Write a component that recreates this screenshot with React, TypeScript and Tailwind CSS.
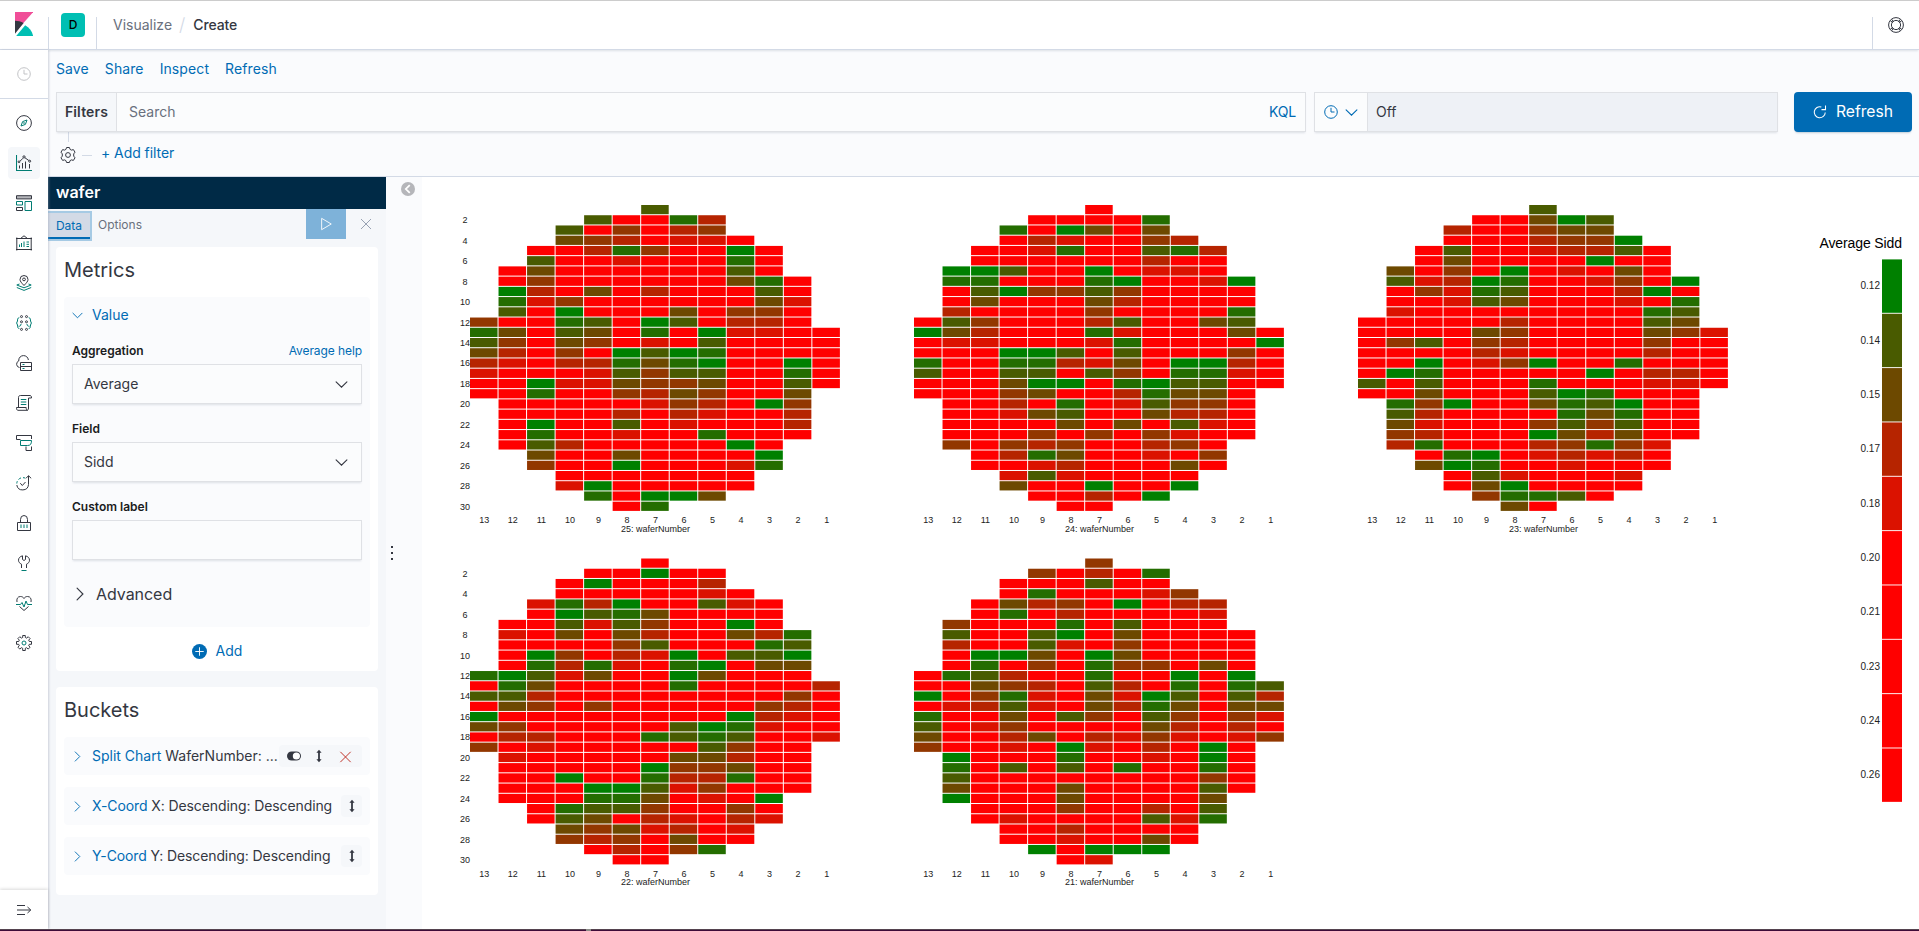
import React from "react";

const TONES: Record<string, string> = {
  "0": "#008000",
  "1": "#246d00",
  "2": "#495b00",
  "3": "#6d4900",
  "4": "#923700",
  "5": "#b62400",
  "6": "#db1200",
  r: "#ff0000",
};

// Leading empty columns of each wafer row.
const OFFSETS = [6, 4, 3, 3, 2, 2, 1, 1, 1, 1, 1, 0, 0, 0, 0, 0, 0, 0, 0, 1, 1, 1, 1, 1, 2, 2, 3, 3, 4, 5];

const W25_ROWS = [
  "2", "2rr15", "2r4r54", "345r66r", "rr514rr0r", "2rr6rrr1r", "r3rrrrrr2r", "r4rrrrrr31r", "05r3r5rrr2r", "164rrrrrr36",
  "2r0rrr3r44r", "4rr12r02r55r", "13r23r1r066rr", "24r34r6r2rrrr", "35r4r0201rrrr", "56r551310rr0r", "6rrr62422rr1r",
  "rr0663443rr2r", "rr1rr4534rr3", "rrrrr645r04", "rrrr5r56rr5", "r0rr2r6rrr5", "r1rr6rr1rrr", "r25rrrrr0r",
  "3rr3rrrr0", "4rr0rrr61", "rrrrrrr", "60rrrrr", "1r003", "r1",
];
const W24_ROWS = [
  "r", "rrrr1", "1r03r3", "r56rr45", "rr61rr215", "rrrrrr5rr", "002rr0r66r", "11rrr10rr60", "r204424rrrr", "r3rrr35rrrr",
  "5rrrr4rrrr1", "r24rrr52rr32", "035rrr16rrr3r", "r66rrr61rrrr0", "rrr002r2rrr4r", "1rr11563r005r", "2rr22r24r116r",
  "rrr300r1022rr", "rrr43rr5133r", "rr5r1r6244r", "rr632rr355r", "rrrr3r3r26r", "rrr4r4r46rr", "4r454rr54r",
  "r513rr6r4", "rr65rrr3r", "626rrrr", "3rr0rr0", "rr5r0", "rr",
];
const W23_ROWS = [
  "2", "rr302", "5rr433", "rrr5440", "r2rr6552r", "r3rrrr0rr", "3r4r0r6r3r", "26501rr64r0", "r4612rrr50r", "rr623rrr6r1",
  "6rrrrrrrr12", "rrrrr5rrrr23", "rrrr34rrrr346", "r42r45rrrr4rr", "rrrr56rrrr5rr", "rr0r640rr1rrr", "r01rrrrr0r55r",
  "2r2rrr1rrr66r", "rr3rrr201rrr", "140rr3120rr", "25rrrr131rr", "36rrr4242rr", "45rrr0353rr", "51rrr54146",
  "r10r6565r", "301rr6rrr", "r26rrr6", "r30rrrr", "4112r", "3r",
];
const W22_ROWS = [
  "r", "rr0rr", "r0rrr5", "rrrrr6r", "6150rr26r", "r0213rrrr", "rr2624rr0r", "6r3r35rr351", "rrrr42rrr12", "r04r560r220",
  "r1516r10r33", "10263rr03rrr", "r13rrrr1rrrr5", "225rrrrrrrr4r", "r34r4rrrrr45r", "0rrrrrrrr056r", "34rrrrr2016rr",
  "r55rrr1212rr6", "4r6rrrrr24rr", "6rrrrr335rr", "rrrrr0443rr", "rr0rr1551rr", "rrr00264rrr", "rrr113r6r0",
  "r1224rr4r", "r23r56r56", "34365r6", "454r3rr", "r5r41", "rr",
];
const W21_ROWS = [
  "4", "4r5r1", "rrr2rr", "r1rrr64", "r354r0r55", "r1r5rrrr6", "4rrr1r2rrr", "2rr20r3rrrr", "5rr26r4rrrr", "r003r03rrrr",
  "r1r4r144r3r", "r125rr1rr0r0", "rr345r25r1r12", "0r416r3602r25", "r6526r3513r33", "1rr3r24r24r46", "2r64rrrr35r5r",
  "3rr53r5646r64", "4rr6r06r5r0r", "0rrr1rr6r0r", "1r2r2r1rr1r", "2rrrrrrrr4r", "3rrr3rrrr2r", "0rrr3rrrr3",
  "rrr4rr5r2", "r6rrrr261", "rr5rrrr", "rr6rr3r", "0r000", "r6",
];

const PX = 28.53;
const PY = 10.23;
const COLS = [13, 12, 11, 10, 9, 8, 7, 6, 5, 4, 3, 2, 1];

function Wafer({ x, y, n, rows, axis }: { x: number; y: number; n: number; rows: string[]; axis?: boolean }) {
  return (
    <g>
      {rows.map((row, r) =>
        row.split("").map((c, i) => (
          <rect key={r + "-" + i} x={x + (OFFSETS[r] + i) * PX} y={y + r * PY} width={PX - 1} height={PY - 1} fill={TONES[c]} />
        )),
      )}
      <g fontSize="9" textAnchor="middle" fill="#222">
        {axis &&
          rows.map((_, r) => (r % 2 ? <text key={r} x={x - 5} y={y + r * PY + 8}>{r + 1}</text> : null))}
        {COLS.map((c, i) => (
          <text key={c} x={x + i * PX + 14.3} y={y + 318.4}>{c}</text>
        ))}
        <text x={x + 185.4} y={y + 326.6}>{n}: waferNumber</text>
      </g>
    </g>
  );
}

const LEGEND = [
  ["0.12", "0"], ["0.14", "2"], ["0.15", "3"], ["0.17", "5"], ["0.18", "6"],
  ["0.20", "r"], ["0.21", "r"], ["0.23", "r"], ["0.24", "r"], ["0.26", "r"],
];

function Charts() {
  return (
    <svg width="1497" height="752" viewBox="422 177 1497 752" className="block font-['Liberation_Sans',sans-serif]">
      <Wafer x={470} y={205} n={25} rows={W25_ROWS} axis />
      <Wafer x={914} y={205} n={24} rows={W24_ROWS} />
      <Wafer x={1358} y={205} n={23} rows={W23_ROWS} />
      <Wafer x={470} y={558.5} n={22} rows={W22_ROWS} axis />
      <Wafer x={914} y={558.5} n={21} rows={W21_ROWS} />
      <text x="1902" y="248" fontSize="14" textAnchor="end" fill="#000" textLength="82.500">Average Sidd</text>
      {LEGEND.map(([label, c], i) => (
        <g key={label}>
          <rect x="1882" y={259.4 + i * 54.34} width="20" height="53.4" fill={TONES[c]} />
          <text x="1880" y={289.3 + i * 54.34} fontSize="10" textAnchor="end" fill="#222">{label}</text>
        </g>
      ))}
    </svg>
  );
}

const D = "#343741";
const T = "#017d73";

function Icon({ children, size = 16, box = 16, stroke = D }: { children: React.ReactNode; size?: number; box?: number; stroke?: string }) {
  return (
    <svg width={size} height={size} viewBox={`0 0 ${box} ${box}`} fill="none" stroke={stroke} className="shrink-0">
      {children}
    </svg>
  );
}

const GEAR =
  "M6.600.5h2.800l.7 1.900 1.300.7 2-.5 1.600 2.600-1.300 1.700v2.200l1.300 1.700-1.600 2.600-2-.5-1.300.7-.7 1.900H6.600l-.7-1.900-1.300-.7-2 .5L1 10.800l1.300-1.700V6.900L1 5.200l1.600-2.600 2 .5 1.300-.7z";

const NAV: React.ReactNode[] = [
  <><circle cx="8" cy="8" r="7.400" /><path stroke={T} d="M11 5 9.400 9.400 5 11 6.600 6.600z" /><circle cx="8" cy="8" r=".4" stroke={T} /></>,
  <><path stroke={T} d="M.5 0v15.500H16" strokeWidth="1.100" /><path d="M3.500 13.500v-3M6.500 13.500v-5.500M9.500 13.500v-7M13.500 13.500V9M4 6.200l3-3M9 2.800l3.800 2.700" /><circle cx="3" cy="6.800" r=".9" /><circle cx="8" cy="1.900" r="1.100" /><circle cx="13.700" cy="6.200" r="1" /></>,
  <><path d="M.5.7h15v3.200H.5z" fill="#b5b6ba" /><path stroke={T} d="M9 6.500h6.500v9H9zM.5 6.500h6v3.500H.5z" /><path d="M.5 12.500h6v3H.5z" /></>,
  <><path d="M.8 2.500v13M15.200 2.500v13M0 3.500h16M4.500 3.500 8 .8l3.500 2.700M0 14.500h16" /><path stroke={T} d="M3.500 12V9.500M5.500 12V8M8 12V6.500M10.500 7h2.500M10.500 9.300h2.500M10.500 11.500h2.500" /></>,
  <><path d="M8 10.500C5.500 7.800 4 6.300 4 4.500a4 4 0 0 1 8 0c0 1.800-1.500 3.300-4 6z" /><circle cx="8" cy="4.400" r="1.400" /><path stroke={T} d="M3.500 9 .8 10 8 12.800 15.200 10l-2.700-1M.8 12.500 8 15.400l7.200-2.900" /></>,
  <><g><circle cx="5.500" cy="1.600" r="1" /><circle cx="10.500" cy="1.600" r="1" /><circle cx="5.500" cy="6.800" r="1" /><circle cx="10.500" cy="6.800" r="1" /><circle cx="5.500" cy="14.400" r="1" /><circle cx="10.500" cy="14.400" r="1" /></g><path stroke={T} d="M3.300 2.500C1.500 3 1.500 4.500 1.500 6L.6 8l.9 2c0 2 .2 3.500 1.800 3.500M12.700 2.500c1.800.5 1.800 2 1.800 3.500l.9 2-.9 2c0 2-.2 3.500-1.800 3.500M5 9c0 1.800-1 2.300-2.500 2.300M11 9c0 1.800 1 2.300 2.500 2.300" /></>,
  <><path d="M3.500 12.500a3.400 3.400 0 0 1-.8-6.500C2.500 2.500 5 .6 7.500.6s4.500 1.600 4.900 4.400" /><path d="M4.500 7.500h11v8h-11zM4.500 11.500h11" /><path stroke={T} d="M6.500 9.500h2M6.500 13.500h2" /></>,
  <><path d="M2.500 12.500V2.500c0-1.200.6-2 2-2h9.500c1 0 1.500.8 1.500 2.500h-3M12.500 3v10c0 1.500-.5 2.300-1.500 2.300H2C1 15.300.5 14.500.5 12.500h9.700c0 1.500.3 2.800 1.300 2.800" /><path stroke={T} d="M4.800 4.500h5.500M4.800 7h5.500M4.800 9.500h5.500" /></>,
  <><path d="M4.500 4.500h-4v-4h15v3.500M15.500 11.500v4H10v-4" /><path stroke={T} d="M4.500 5.500h11c0 3.500-1 5-4 5h-7z" /></>,
  <><path d="M12.500 9.500V.8M10 3.300 12.500.7 15.200 3.300M.8 10a5.900 5.900 0 0 0 11.700-.5M4.300 8.200 6.300 10.500 9.500 7" /><path stroke={T} d="M.8 8.500c0-.8.200-1.600.5-2.300M2.500 4.500c.8-.8 1.600-1.300 2.500-1.600M7 2.700c.8 0 1.500 0 2.200.4" /></>,
  <><path d="M1.500 7.500h13v8h-13zM4.500 7.500V4.500a3.500 4 0 0 1 7 0v3" /><path stroke={T} d="M5 9.500v3.500M8 9.500v3.500M11 9.500v3.500" /></>,
  <><path d="M6.500.8C4 1.500 2.500 3 2.500 5.200c0 1.800 1 3 3 4V13M9.500.8c2.500.7 4 2.200 4 4.400 0 1.800-1 3-3 4V13M6.500.8v3.700L8 5.500l1.500-1V.8" /><path stroke={T} d="M5.500 15.500h5" /></>,
  <><path d="M1 7C.4 4 1.500 1.500 4.500 1.500c1.700 0 2.800.8 3.500 2 .7-1.200 1.800-2 3.500-2 3 0 4.100 2.500 3.500 5.500M3.500 11.500 8 15.500l4.500-4" /><path stroke={T} d="M0 9.500h4.500l1.500-2 2 4.500 2-6 1.500 3.500H16" /></>,
  <><path strokeLinejoin="round" d="M6.700.5h2.600v2l1.400.6 1.500-1.400 1.900 1.900-1.400 1.500.6 1.400h2.200v2.800h-2.200l-.6 1.500 1.400 1.400-1.900 1.900-1.500-1.400-1.400.6v2.200H6.700v-2.200l-1.400-.6-1.500 1.400-1.900-1.900 1.400-1.400-.6-1.500H.5V6.500h2.200l.6-1.400-1.400-1.500 1.900-1.900 1.500 1.400 1.400-.6z" /><circle cx="8" cy="8" r="2" stroke={T} /></>,
];

function Chevron({ dir, size = 12, color = "#006bb4" }: { dir: "down" | "right"; size?: number; color?: string }) {
  return (
    <Icon size={size} stroke={color} box={12}>
      <path strokeLinecap="round" d={dir === "down" ? "M1 3.500 6 8.500 11 3.500" : "M3.500 1 8.500 6 3.500 11"} />
    </Icon>
  );
}

function Clock({ color, size = 14 }: { color: string; size?: number }) {
  return (
    <Icon size={size} box={14} stroke={color}>
      <circle cx="7" cy="7" r="6.300" />
      <path d="M7 2.800V7h3.500" />
    </Icon>
  );
}

const SortIcon = () => (
  <Icon>
    <path d="M8 3v10" strokeWidth="1.800" />
    <path d="M5.400 4.800 8 1.800l2.600 3zM5.400 11.200 8 14.200l2.600-3z" fill="#343741" stroke="none" />
  </Icon>
);

function Select({ value }: { value?: string }) {
  return (
    <div className="flex h-10 items-center justify-between border border-[#dfe1e5] bg-[#fbfcfd] pr-[13px] pl-[11px] shadow-[0_2px_2px_-1px_rgba(152,162,179,0.3)]">
      <span>{value}</span>
      {value && <Chevron dir="down" size={13} color={D} />}
    </div>
  );
}

function Bucket({ kind, text, full }: { kind: string; text: string; full?: boolean }) {
  return (
    <div className="flex h-[38px] items-center rounded bg-[#fafbfd] pr-2 pl-2">
      <div className="mr-[9px] flex w-[11px] justify-center pt-px">
        <Chevron dir="right" size={11} />
      </div>
      <div className={full ? "min-w-0 flex-1 whitespace-nowrap" : "min-w-0 flex-1 tracking-[-0.1px] whitespace-nowrap"}>
        <span className="text-[#006bb4]">{kind}</span> {text}
      </div>
      <div className={full ? "flex h-[22px] w-[83px] shrink-0 items-center rounded bg-[#f5f7fa] pl-[7px]" : "flex h-[22px] w-[21px] shrink-0 items-center justify-center rounded bg-[#f5f7fa]"}>
        {full ? (
          <>
            <Icon>
              <rect x="1" y="3.400" width="14" height="9.200" rx="4.600" fill={D} stroke="none" />
              <circle cx="10.400" cy="8" r="3.600" fill="#fff" stroke="none" />
            </Icon>
            <div className="ml-[9px]"><SortIcon /></div>
            <div className="mt-px ml-[11px]">
              <Icon size={15} stroke="#bd271e"><path d="M2.500 3l11 11M13.500 3l-11 11" /></Icon>
            </div>
          </>
        ) : (
          <SortIcon />
        )}
      </div>
    </div>
  );
}

export default function App() {
  return (
    <div className="relative flex h-[931px] w-[1919px] flex-col overflow-hidden bg-white font-['Inter',sans-serif] text-[14px] leading-5 text-[#343741]">
      <div className="h-px shrink-0 bg-[#cccccc]" />
      <div className="z-10 flex h-[49px] shrink-0 border-b border-[#d3dae6] bg-white shadow-[0_2px_2px_-1px_rgba(152,162,179,0.3)]">
        <div className="flex w-12 shrink-0 justify-center pt-[11px]">
          <svg width="18" height="24" viewBox="0 0 18 24" className="block">
            <path d="M0 0h18.300L0 20.500z" fill="#f04e98" />
            <path d="M0 8.800v13L8.600 10.900C6 9.500 3 8.800 0 8.800z" fill="#343741" />
            <path d="M10.200 13.200 1.200 24h17C17.300 19.500 14.500 15.500 10.200 13.200z" fill="#00bfb3" />
          </svg>
        </div>
        <div className="mt-4 flex w-[49px] shrink-0 border-x border-[#d3dae6]">
          <div className="-mt-1 ml-3 flex h-6 w-6 items-center justify-center rounded bg-[#00bfb3] text-[12px] font-medium text-black">D</div>
        </div>
        <div className="flex pt-[14px] pl-4">
          <span className="text-[#69707d]">Visualize</span>
          <span className="mr-[5px] ml-[7px] text-[18px] font-light text-[#d3dae6]">/</span>
          <span className="ml-[3px] font-medium tracking-[-0.15px]">Create</span>
        </div>
        <div className="flex-1" />
        <div className="mt-4 flex w-[47px] border-l border-[#d3dae6] pl-[15px]">
          <Icon>
            <circle cx="8" cy="8" r="7.400" />
            <circle cx="8" cy="8" r="4.600" />
            <path d="M2.500 4 5 5.500M4 2.500 5.500 5M13.500 4 11 5.500M12 2.500 10.500 5M2.500 12 5 10.500M4 13.500 5.500 11M13.500 12 11 10.500M12 13.500 10.500 11" />
          </Icon>
        </div>
      </div>

      <div className="flex min-h-0 flex-1">
        <div className="z-10 flex w-12 shrink-0 flex-col bg-white shadow-[1px_0_2px_rgba(152,162,179,0.45)]">
          <div className="flex h-[49px] items-center justify-center border-b border-[#d3dae6] pr-px">
            <Clock color="#c2c3c6" />
          </div>
          <div className="flex flex-1 flex-col items-center gap-2 pt-2">
            {NAV.map((n, i) => (
              <div key={i} className={i === 1 ? "flex h-8 w-8 items-center justify-center rounded bg-[#f5f7fa]" : "flex h-8 w-8 items-center justify-center"}>
                <Icon>{n}</Icon>
              </div>
            ))}
          </div>
          <div className="flex h-[39px] items-center justify-center shadow-[0_-1px_3px_rgba(0,0,0,0.15)]">
            <Icon><path d="M1 3.500h8M1 8h13.500M1 12.500h8M11.500 5l3.300 3-3.300 3" /></Icon>
          </div>
        </div>

        <div className="flex min-w-0 flex-1 flex-col">
          <div className="h-[127px] shrink-0 border-b border-[#d3dae6] bg-[#fafbfd]">
            <div className="flex gap-4 pt-[9px] pl-2 tracking-[0.1px] text-[#006bb4]">
              <span>Save</span><span>Share</span><span>Inspect</span><span>Refresh</span>
            </div>
            <div className="mt-[13px] flex h-10 pr-[7px] pl-2">
              <div className="flex w-[1250px] items-center border border-[#dfe1e5] bg-[#fbfcfd] shadow-[0_2px_2px_-1px_rgba(152,162,179,0.3)]">
                <div className="flex h-full w-[60px] items-center justify-center border-r border-[#dfe1e5] bg-[#f5f7fa] font-semibold tracking-[0.15px]">Filters</div>
                <div className="flex-1 pl-3 text-[#69707d]">Search</div>
                <div className="pr-[9px] tracking-[-0.2px] text-[#006bb4]">KQL</div>
              </div>
              <div className="ml-2 flex w-[464px] border border-[#dfe1e5] bg-[#eef1f6] shadow-[0_2px_2px_-1px_rgba(152,162,179,0.3)]">
                <div className="flex w-[53px] items-center gap-[7px] border-r border-[#dfe1e5] bg-[#fbfcfd] pl-[9px]">
                  <Clock color="#006bb4" />
                  <Chevron dir="down" size={13} />
                </div>
                <div className="flex items-center pl-2">Off</div>
              </div>
              <div className="ml-4 flex w-[118px] items-center justify-center gap-[9px] rounded bg-[#006bb4] text-white shadow-[0_2px_2px_-1px_rgba(54,97,126,0.3)]">
                <Icon size={14} stroke="#fff"><path d="M9.500 2.200A6.300 6.300 0 1 0 14 8.500M14.300.5v4.800H9.700" strokeWidth="1.200" /></Icon>
                <span className="text-[15.700px]">Refresh</span>
              </div>
            </div>
            <div className="ml-5 h-[10px] w-px bg-[#d3dae6]" />
            <div className="flex items-center pt-px pl-3">
              <div className="mt-[4px]">
                <Icon><path d={GEAR} strokeLinejoin="round" /><circle cx="8" cy="8" r="2.400" /></Icon>
              </div>
              <div className="mt-[4px] ml-[6px] h-px w-[10px] bg-[#d3dae6]" />
              <span className="ml-[9px] tracking-[-0.06px] text-[#006bb4]">+ Add filter</span>
            </div>
          </div>

          <div className="flex min-h-0 flex-1">
            <div className="w-[338px] shrink-0 bg-[#f5f7fa]">
              <div className="flex h-8 items-center bg-[#002a46] pb-[2px] pl-2 text-[16px] font-semibold text-white">wafer</div>
              <div className="flex h-[30px] text-[12px]">
                <div className="mt-1 flex h-[26px] w-[42px] items-center justify-center border-b-2 border-[#006bb4] bg-[#d3dae6] pt-px text-[#006bb4] shadow-[0_0_0_2px_#a6cae4]">
                  Data
                </div>
                <div className="mt-[6px] ml-2 text-[#69707d]">
                  <span>Options</span>
                </div>
                <div className="flex-1" />
                <div className="flex w-10 items-center justify-center bg-[#7eb2d9]">
                  <Icon size={14} stroke="#fff"><path d="M3 1.500 14 8 3 14.500z" strokeLinejoin="round" /></Icon>
                </div>
                <div className="flex w-10 items-center justify-center">
                  <Icon size={12} box={12} stroke="#98a2b3"><path d="M1 1l10 10M11 1 1 11" /></Icon>
                </div>
              </div>

              <div className="mx-2 mt-2 h-[424px] rounded bg-white px-2 pt-[11px]">
                <div className="text-[20px] leading-6">Metrics</div>
                <div className="mt-[15px] h-[330px] rounded bg-[#fafbfd] px-2 pt-2">
                  <div className="flex items-center text-[#006bb4]">
                    <Chevron dir="down" size={11} />
                    <span className="ml-[9px]">Value</span>
                  </div>
                  <div className="mt-[17px] flex h-[18px] justify-between text-[12px] leading-[18px]">
                    <span className="font-semibold text-[#1a1c21]">Aggregation</span>
                    <span className="tracking-[-0.08px] text-[#006bb4]">Average help</span>
                  </div>
                  <div className="mt-1"><Select value="Average" /></div>
                  <div className="mt-4 text-[12px] leading-[18px] font-semibold text-[#1a1c21]">Field</div>
                  <div className="mt-1"><Select value="Sidd" /></div>
                  <div className="mt-4 text-[12px] leading-[18px] font-semibold text-[#1a1c21]">Custom label</div>
                  <div className="mt-1"><Select /></div>
                  <div className="mt-[22px] flex items-center text-[16px] leading-6">
                    <div className="ml-px"><Chevron dir="right" size={14} color={D} /></div>
                    <span className="ml-[9px] tracking-[-0.05px]">Advanced</span>
                  </div>
                </div>
                <div className="mt-[14px] flex items-center justify-center text-[#006bb4]">
                  <Icon size={15} stroke="#fff"><circle cx="8" cy="8" r="8" fill="#006bb4" stroke="none" /><path d="M8 3.500v9M3.500 8h9" /></Icon>
                  <span className="ml-[9px]">Add</span>
                </div>
              </div>

              <div className="mx-2 mt-4 h-[208px] rounded bg-white px-2 pt-[11px]">
                <div className="text-[20px] leading-6">Buckets</div>
                <div className="mt-[15px] flex flex-col gap-3">
                  <Bucket kind="Split Chart" text="WaferNumber: ..." full />
                  <Bucket kind="X-Coord" text="X: Descending: Descending" />
                  <Bucket kind="Y-Coord" text="Y: Descending: Descending" />
                </div>
              </div>
            </div>
            <div className="flex w-9 shrink-0 flex-col bg-[#fafbfd] pt-[5px]">
              <div className="ml-[15px]">
                <Icon size={14} stroke="#fff"><circle cx="8" cy="8" r="8" fill="#b5b6ba" stroke="none" /><path d="M10 3.500 5.500 8l4.500 4.500" strokeWidth="2" /></Icon>
              </div>
              <div className="mt-[350px] ml-[5px] flex flex-col gap-1">
                <div className="h-[2px] w-[2px] bg-[#343741]" />
                <div className="h-[2px] w-[2px] bg-[#343741]" />
                <div className="h-[2px] w-[2px] bg-[#343741]" />
              </div>
            </div>
            <Charts />
          </div>
        </div>
      </div>
      <div className="z-20 flex h-[2px] shrink-0 border-t border-[#55434f] bg-[#3e0b38] pl-[586px]">
        <div className="-mt-px h-[2px] w-[5px] bg-[#8d8d88]" />
      </div>
    </div>
  );
}
